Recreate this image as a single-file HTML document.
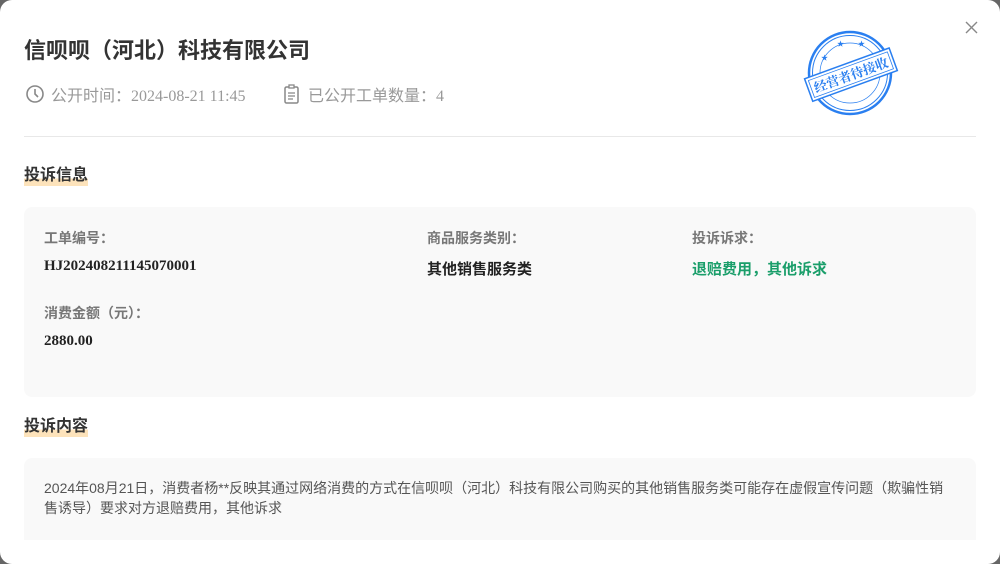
<!DOCTYPE html>
<html><head><meta charset="utf-8"><style>
*{margin:0;padding:0;box-sizing:border-box}
html,body{width:1000px;height:564px;overflow:hidden;background:#666;font-family:"Liberation Sans","Noto Sans CJK SC",sans-serif}
.m{position:absolute;left:0;top:0;width:1000px;height:564px;background:#fff;border-radius:12px;overflow:hidden}
.t{position:absolute;left:24px;top:33px;font-size:22px;font-weight:bold;color:#333;letter-spacing:0}
.meta{position:absolute;top:82px;font-size:16px;color:#999;font-family:"Liberation Serif","Noto Sans CJK SC",serif;display:flex;align-items:center}
.hr{position:absolute;left:24px;right:24px;top:136px;height:1px;background:#e8e8e8}
.h{position:absolute;left:24px;font-size:16px;font-weight:bold;color:#333;background:linear-gradient(transparent 62%,#fde3bb 62%);line-height:20px}
.card{position:absolute;left:24px;width:952px;background:#f9f9f9;border-radius:8px}
.lb{position:absolute;font-size:14px;font-weight:bold;color:#777}
.v{position:absolute;font-size:15px;font-weight:bold;color:#222;font-family:"Liberation Serif","Noto Sans CJK SC",serif}
</style></head><body><div class="m">
<div class="t">信呗呗（河北）科技有限公司</div>
<div class="meta" style="left:25px"><svg width="20" height="20" viewBox="0 0 20 20" style="margin-right:6px"><circle cx="10" cy="10" r="8" fill="none" stroke="#888" stroke-width="1.6"/><path d="M10 5v5l3 3" fill="none" stroke="#888" stroke-width="1.6"/></svg>公开时间：2024-08-21 11:45</div>
<div class="meta" style="left:283px"><svg width="18" height="20" viewBox="0 0 18 20" style="margin-right:7px"><rect x="2" y="3" width="13" height="16" rx="1.5" fill="none" stroke="#888" stroke-width="1.5"/><rect x="6" y="1" width="5" height="3" fill="#fff" stroke="#888" stroke-width="1.3"/><path d="M5 9h7M5 12h7M5 15h5" stroke="#888" stroke-width="1.3"/></svg>已公开工单数量：4</div>
<svg style="position:absolute;left:800px;top:28px" width="102" height="90" viewBox="0 0 102 90">
<circle cx="50" cy="45" r="41" fill="none" stroke="#2a7ff0" stroke-width="2.5"/>
<circle cx="50" cy="45" r="37.5" fill="none" stroke="#2a7ff0" stroke-width="1"/>
<circle cx="50" cy="45" r="30" fill="none" stroke="#2a7ff0" stroke-width=".7"/>
<text x="37" y="18" fill="#2a7ff0" font-size="7">★</text><text x="58" y="18" fill="#2a7ff0" font-size="7">★</text><text x="21" y="32" fill="#2a7ff0" font-size="7">★</text>
<g transform="rotate(-20 50 47)"><rect x="6" y="35" width="90" height="24" fill="#fff" stroke="#2a7ff0" stroke-width="1.5"/><rect x="9" y="38" width="84" height="18" fill="none" stroke="#2a7ff0" stroke-width=".8"/><text x="51" y="52" text-anchor="middle" fill="#2a7ff0" font-size="13" font-weight="bold" font-family="Noto Serif CJK SC,serif">经营者待接收</text></g>
</svg>
<svg style="position:absolute;left:965px;top:21px" width="13" height="13" viewBox="0 0 13 13"><path d="M1 1l11 11M12 1L1 12" stroke="#888" stroke-width="1.4"/></svg>
<div class="hr"></div>
<div class="h" style="top:166px">投诉信息</div>
<div class="card" style="top:207px;height:190px">
<div class="lb" style="left:20px;top:21px">工单编号：</div>
<div class="v" style="left:20px;top:51px">HJ202408211145070001</div>
<div class="lb" style="left:403px;top:21px">商品服务类别：</div>
<div class="v" style="left:403px;top:51px">其他销售服务类</div>
<div class="lb" style="left:668px;top:21px">投诉诉求：</div>
<div class="v" style="left:668px;top:51px;color:#1a9e6a">退赔费用，其他诉求</div>
<div class="lb" style="left:20px;top:96px">消费金额（元）：</div>
<div class="v" style="left:20px;top:126px">2880.00</div>
</div>
<div class="h" style="top:417px">投诉内容</div>
<div class="card" style="top:458px;height:82px;border-radius:8px 8px 0 0;padding:20px 20px;font-size:14px;color:#555;line-height:20px">2024年08月21日，消费者杨**反映其通过网络消费的方式在信呗呗（河北）科技有限公司购买的其他销售服务类可能存在虚假宣传问题（欺骗性销售诱导）要求对方退赔费用，其他诉求</div>
</div></body></html>
